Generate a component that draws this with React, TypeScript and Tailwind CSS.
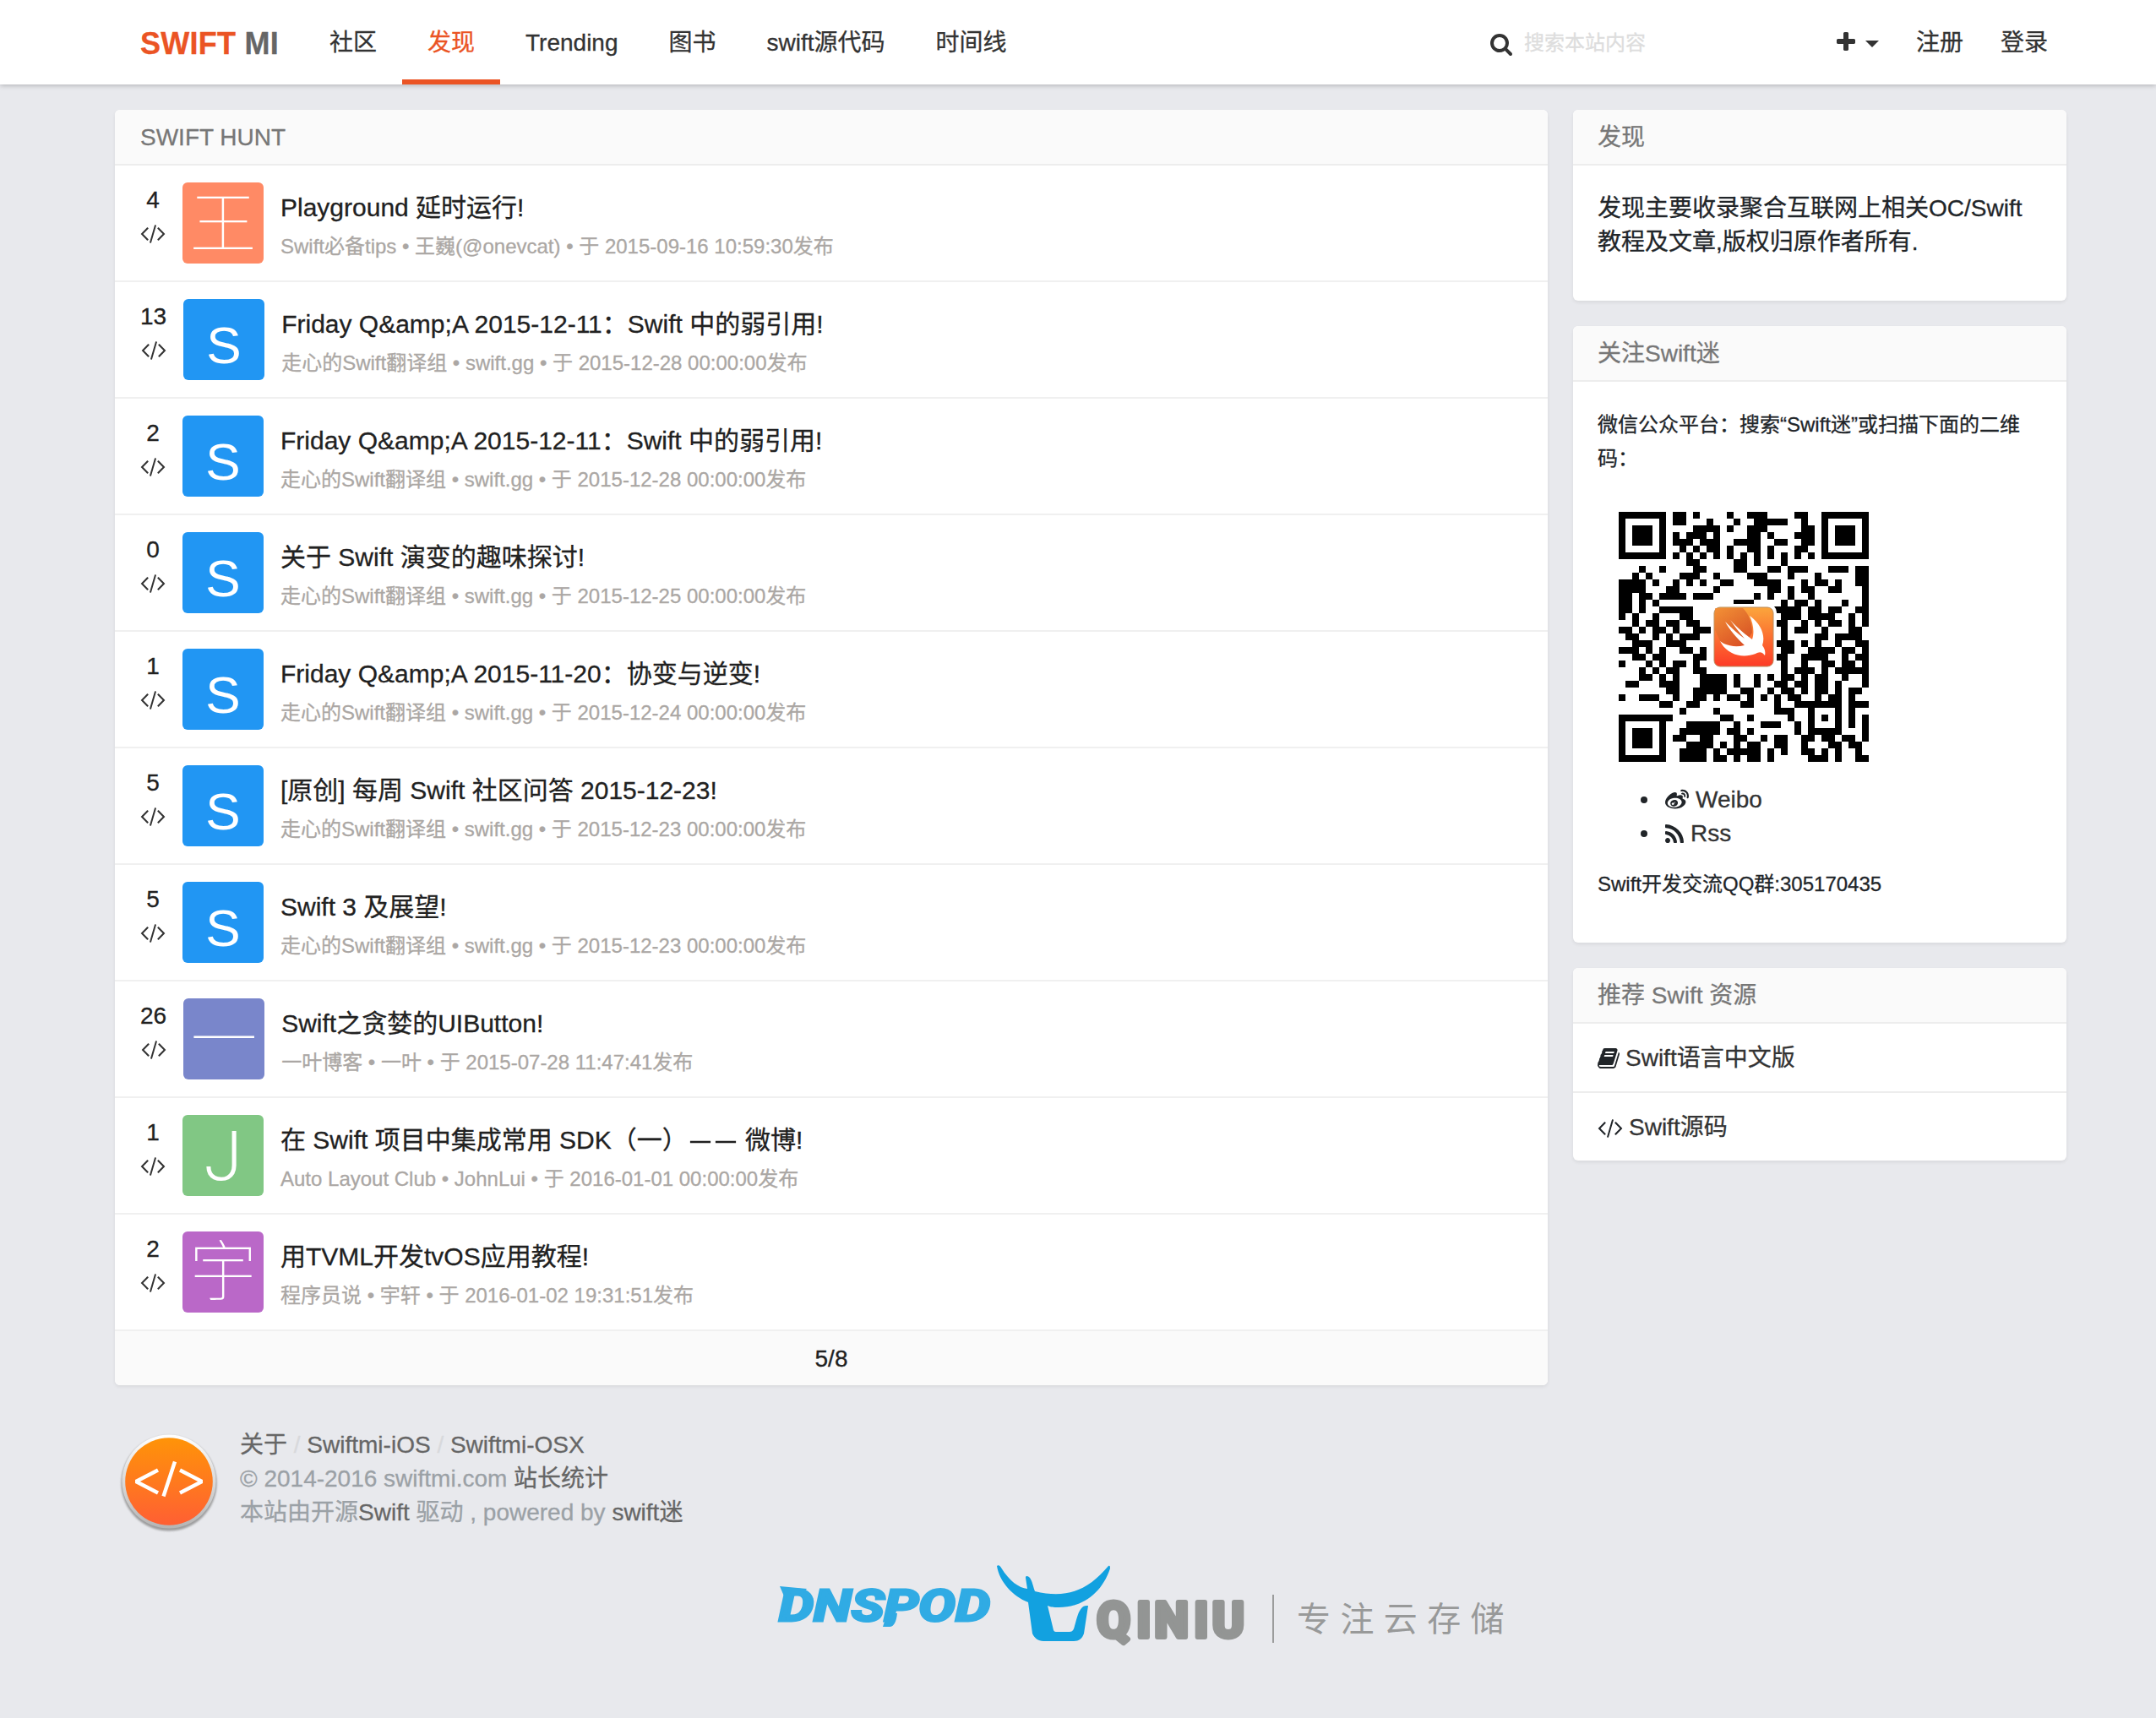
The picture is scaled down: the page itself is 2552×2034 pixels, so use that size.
import React from "react";

const FONT = "font-['Liberation_Sans','Noto_Sans_CJK_SC',sans-serif] [-webkit-text-stroke:0.3px]";

type IconProps = { className?: string };

function FaIcon({ box, d, className }: IconProps & { box: string; d: string }) {
  return (
    <svg viewBox={box} className={className} fill="currentColor" aria-hidden="true">
      <path d={d} />
    </svg>
  );
}

const CODE =
  "M617 1399l-50 50q-10 10-23 10t-23-10l-466-466q-10-10-10-23t10-23l466-466q10-10 23-10t23 10l50 50q10 10 10 23t-10 23l-393 393 393 393q10 10 10 23t-10 23zm591-1067l-373 1291q-4 13-15.5 19.5t-23.5 2.5l-62-17q-13-4-19.5-15.5t-2.5-24.5l373-1291q4-13 15.5-19.5t23.5-2.5l62 17q13 4 19.5 15.5t2.5 24.5zm657 651l-466 466q-10 10-23 10t-23-10l-50-50q-10-10-10-23t10-23l393-393-393-393q-10-10-10-23t10-23l50-50q10-10 23-10t23 10l466 466q10 10 10 23t-10 23z";
const SEARCH =
  "M1216 832q0-185-131.5-316.5t-316.5-131.5-316.5 131.5-131.5 316.5 131.5 316.5 316.5 131.5 316.5-131.5 131.5-316.5zm512 832q0 52-38 90t-90 38q-54 0-90-38l-343-342q-179 124-399 124-143 0-273.5-55.5t-225-150-150-225-55.5-273.5 55.5-273.5 150-225 225-150 273.5-55.5 273.5 55.5 225 150 150 225 55.5 273.5q0 220-124 399l343 343q37 37 37 90z";
const BOOK =
  "M1703 478q40 57 18 129l-275 906q-19 64-76.5 107.5t-122.5 43.5h-923q-77 0-148.5-53.5t-99.5-131.5q-24-67-2-127 0-4 3-27t4-37q1-8-3-21.5t-3-19.5q2-11 8-21t16.5-23.5 16.5-23.5q23-38 45-91.5t30-91.5q3-10 .5-30t-.5-28q3-11 17-28t17-23q21-36 42-92t25-90q1-9-2.5-32t.5-28q4-13 22-30.5t22-22.5q19-26 42.5-84.5t27.5-96.5q1-8-3-25.5t-2-26.5q2-8 9-18t18-23 17-21q8-12 16.5-30.5t15-35 16-36 19.5-32 26.5-23.5 36-11.5 47.5 5.5l-1 3q38-9 51-9h761q74 0 114 56t18 130l-274 906q-36 119-71.5 153.5t-128.5 34.5h-869q-27 0-38 15-11 16-1 43 24 70 144 70h923q29 0 56-15.5t35-41.5l300-987q7-22 5-57 38 15 59 43zm-1064 2q-4 13 2 22.5t20 9.5h608q13 0 25.5-9.5t16.5-22.5l21-64q4-13-2-22.5t-20-9.5h-608q-13 0-25.5 9.5t-16.5 22.5zm-83 256q-4 13 2 22.5t20 9.5h608q13 0 25.5-9.5t16.5-22.5l21-64q4-13-2-22.5t-20-9.5h-608q-13 0-25.5 9.5t-16.5 22.5z";
const PLUS =
  "M1600 736v192q0 40-28 68t-68 28h-416v416q0 40-28 68t-68 28h-192q-40 0-68-28t-28-68v-416h-416q-40 0-68-28t-28-68v-192q0-40 28-68t68-28h416v-416q0-40 28-68t68-28h192q40 0 68 28t28 68v416h416q40 0 68 28t28 68z";
const RSS =
  "M576 1344q0 80-56 136t-136 56-136-56-56-136 56-136 136-56 136 56 56 136zm512 123q2 28-17 48-18 21-47 21h-135q-25 0-43-16.5t-20-41.5q-22-229-184.5-391.5t-391.5-184.5q-25-2-41.5-20t-16.5-43v-135q0-29 21-47 17-17 43-17h5q160 13 306 80.5t259 181.5q114 113 181.5 259t80.5 306zm512 2q2 27-18 47-18 20-46 20h-143q-26 0-44.5-17.5t-19.5-42.5q-12-215-101-408.5t-231.5-336-336-231.5-408.5-102q-25-1-42.5-19.5t-17.5-43.5v-143q0-28 20-46 18-18 44-18h3q262 13 501.5 120t425.5 294q187 186 294 425.5t120 501.5z";
const WEIBO =
  "M407 177.6c7.6-24-13.4-46.8-37.4-41.7-22 4.8-28.8-28.1-7.1-32.8 50.1-10.9 92.3 37.1 76.5 84.8-6.8 21.2-38.8 10.8-32-10.3zM214.8 446.7C108.5 446.7 0 395.3 0 310.4c0-44.3 28-95.4 76.3-143.7C176 67 279.5 65.8 249.9 161c-4 13.1 12.3 5.7 12.3 6 79.5-33.6 140.5-16.8 114 51.4-3.7 9.4 1.1 10.9 8.3 13.1 135.7 42.3 34.8 215.2-169.7 215.2zm143.7-146.3c-5.4-55.7-78.5-94-163.4-85.7-84.8 8.6-148.8 60.3-143.4 116s78.5 94 163.4 85.7c84.8-8.6 148.8-60.3 143.4-116zM347.9 35.1c-25.9 5.6-16.8 43.7 8.3 38.3 72.3-15.2 134.8 52.8 111.7 124-7.4 24.2 29.1 37 37.4 12 31.9-99.8-55.1-195.9-157.4-174.3zm-78.5 311c-17.1 38.8-66.8 60-109.1 46.3-40.8-13.1-58-53.4-40.3-89.7 17.7-35.4 63.1-55.4 103.4-45.1 42 10.8 63.1 50.2 46 88.5zm-86.3-30c-12.9-5.4-30 .3-38 12.9-8.3 12.9-4.3 28 8.6 34 13.1 6 30.8.3 39.1-12.9 8-13.1 3.7-28.3-9.7-34zm32.6-13.4c-5.1-1.7-11.4.6-14.3 5.4-2.9 5.1-1.4 10.6 3.7 12.9 5.1 2 11.7-.3 14.6-5.4 2.8-5.2 1.1-10.9-4-12.9z";

const CodeIcon = ({ className }: IconProps) => (
  <FaIcon box="0 0 1920 1792" d={CODE} className={className} />
);

type Item = {
  votes: number;
  letter: string;
  title: React.ReactNode;
  meta: string;
};

const Dash = () => <span className="inline-block scale-x-80">—</span>;

const ITEMS: Item[] = [
  { votes: 4, letter: "王", title: "Playground 延时运行!", meta: "Swift必备tips • 王巍(@onevcat) • 于 2015-09-16 10:59:30发布" },
  { votes: 13, letter: "S", title: "Friday Q&amp;A 2015-12-11：Swift 中的弱引用!", meta: "走心的Swift翻译组 • swift.gg • 于 2015-12-28 00:00:00发布" },
  { votes: 2, letter: "S", title: "Friday Q&amp;A 2015-12-11：Swift 中的弱引用!", meta: "走心的Swift翻译组 • swift.gg • 于 2015-12-28 00:00:00发布" },
  { votes: 0, letter: "S", title: "关于 Swift 演变的趣味探讨!", meta: "走心的Swift翻译组 • swift.gg • 于 2015-12-25 00:00:00发布" },
  { votes: 1, letter: "S", title: "Friday Q&amp;A 2015-11-20：协变与逆变!", meta: "走心的Swift翻译组 • swift.gg • 于 2015-12-24 00:00:00发布" },
  { votes: 5, letter: "S", title: "[原创] 每周 Swift 社区问答 2015-12-23!", meta: "走心的Swift翻译组 • swift.gg • 于 2015-12-23 00:00:00发布" },
  { votes: 5, letter: "S", title: "Swift 3 及展望!", meta: "走心的Swift翻译组 • swift.gg • 于 2015-12-23 00:00:00发布" },
  { votes: 26, letter: "一", title: "Swift之贪婪的UIButton!", meta: "一叶博客 • 一叶 • 于 2015-07-28 11:47:41发布" },
  {
    votes: 1,
    letter: "J",
    title: (
      <>
        在 Swift 项目中集成常用 SDK（一）
        <Dash />
        <Dash /> 微博!
      </>
    ),
    meta: "Auto Layout Club • JohnLui • 于 2016-01-01 00:00:00发布",
  },
  { votes: 2, letter: "宇", title: "用TVML开发tvOS应用教程!", meta: "程序员说 • 宇轩 • 于 2016-01-02 19:31:51发布" },
];

const AVATARS: Record<string, { bg: string; text: string; baseline: number }> = {
  王: { bg: "bg-[#ff8a65]", text: "text-[79px] font-thin [-webkit-text-stroke:1px_white]", baseline: 77 },
  S: { bg: "bg-[#2196f3]", text: "font-['Liberation_Sans'] text-[62px] [-webkit-text-stroke:0px]", baseline: 76 },
  一: { bg: "bg-[#7986cb]", text: "text-[79px] font-thin [-webkit-text-stroke:0.8px_white]", baseline: 77 },
  J: { bg: "bg-[#81c784]", text: "text-[82px] font-light [-webkit-text-stroke:0.8px_white]", baseline: 77 },
  宇: { bg: "bg-[#ba68c8]", text: "text-[79px] font-thin [-webkit-text-stroke:0.8px_white]", baseline: 76 },
};

function Avatar({ letter }: { letter: string }) {
  const a = AVATARS[letter];
  return (
    <div className={`ml-5 size-24 shrink-0 overflow-hidden rounded-md ${a.bg}`}>
      <svg viewBox="0 0 96 96" className="size-24 font-['Roboto','Noto_Sans_CJK_SC',sans-serif]">
        <text x="48" y={a.baseline} textAnchor="middle" fill="#fff" className={a.text}>
          {letter}
        </text>
      </svg>
    </div>
  );
}

function Row({ item }: { item: Item }) {
  return (
    <li className="flex h-[138px] border-b-2 border-[#f0f0f0] px-[30px] pt-5">
      <div className="flex flex-col items-center text-[28px] leading-[42px] text-[#212121]">
        <span>{item.votes}</span>
        <span className="flex h-9 items-center">
          <CodeIcon className="h-7 w-[30px] text-[#333]" />
        </span>
      </div>
      <Avatar letter={item.letter} />
      <div className="ml-5 flex flex-col pt-2.5 whitespace-nowrap">
        <a className="text-[30px] leading-10 text-[#212121]">{item.title}</a>
        <span className="mt-1.5 text-2xl leading-10 text-[#aba7a4]">{item.meta}</span>
      </div>
    </li>
  );
}

const CARD = "overflow-hidden rounded-md bg-white shadow-[0_2px_4px_rgba(0,0,0,0.07)]";

function CardHead({ children, className = "px-[30px]" }: { children: React.ReactNode; className?: string }) {
  return (
    <h2 className={`h-[66px] border-b-2 border-[#ededed] bg-[#fafafa] text-[28px] leading-[66px] text-[#777] ${className}`}>
      {children}
    </h2>
  );
}

const QR_ROWS = [
  "#######.##.#....#..###....##..#######",
  "#.....#.##...#...#..#####..#..#.....#",
  "#.###.#....####.#..###.....##.#.###.#",
  "#.###.#.#.###.#....##.#...###.#.###.#",
  "#.###.#.###.###..####..##..##.#.###.#",
  "#.....#..#.#.##.#..##.#...##..#.....#",
  "#######.#.#.#.#.#.#.#.#.#.#.#.#######",
  "..........##.....##.#...#............",
  "...#..#....##....##...##.###...###.##",
  "..#.#....###..#....###...#...#.....##",
  "####.#..#.#.#..##...####...#.##.#..##",
  "####...##.....#.......##.#.##..##...#",
  "##.##.####.###......#.#..#..#.......#",
  "##.#.#...........###....#.##.#...#..#",
  "##.#..#####............####.##.##..##",
  "#.#..#...##.............###.####..#.#",
  "..#.##.##.##...........##..#.#.##.#.#",
  "##.#.##.#..###..........#.##..#...##.",
  ".##..#.#.###............#....##.####.",
  "..###..###.............###.#.#..#..##",
  "###.#.#..##.#...........##..####.##.#",
  "..##.##....##..........##..####..#.##",
  "#...#.#.##.#............#..#..##.##.#",
  "...#.#.##..##...........#.###.#.#####",
  "...##.#.#...####.#..#.#.##.#.##..#..#",
  ".##...###...####.#..#..##.##.##.#...#",
  ".......##..#####..##..#.##.#.##.#.##.",
  "#..###..#..##.#.##.#.#.#.##..#.##.#..",
  "......##..##......##...#..#######.###",
  ".........#....#........###..#...#.#..",
  "########.......##..#.....#..#.#.#.#.#",
  "#.....#...#####..#...###..#.#...#.#.#",
  "#.###.#..######.##.#......#.#####...#",
  "#.###.#.##..##...##..#.##..##.##.##.#",
  "#.###.#...####.#.#.##..##..#...##.##.",
  "#.....#..####.#.#####.#.#..##.#.#..#.",
  "#######..####.##.#.##.#.....###.#..##",
];

function QrCode() {
  return (
    <svg viewBox="0 0 296 296" className="size-[296px]" shapeRendering="crispEdges">
      <defs>
        <linearGradient id="swiftBg" x1="0" y1="0" x2="0" y2="1">
          <stop offset="0" stopColor="#fba63c" />
          <stop offset="1" stopColor="#fd3b27" />
        </linearGradient>
        <linearGradient id="swiftShade" x1="0" y1="0" x2="1" y2="1">
          <stop offset="0" stopColor="#f08a34" />
          <stop offset="1" stopColor="#c8421f" />
        </linearGradient>
      </defs>
      {QR_ROWS.map((row, y) =>
        row.split("").map((c, x) =>
          c === "#" ? <rect key={`${x}-${y}`} x={x * 8} y={y * 8} width="8" height="8" /> : null
        )
      )}
      <g shapeRendering="auto">
        <rect x="109" y="109" width="78" height="79" rx="10" fill="#fff" />
        <rect x="113" y="113" width="70" height="70" rx="7" fill="url(#swiftBg)" stroke="#b98a5a" strokeWidth="1" />
        <path d="M114 114H147C154 121 158 131 158 143L148 158C139 161 129 157 121 155L114 140Z" fill="url(#swiftShade)" opacity="0.75" />
        <path
          d="M120 153C126 158 137 161 149 158C139 149 131 139 126 130C134 138 142 145 149 150C142 142 136 134 132 128C142 139 151 146 158 151C161 142 159 132 155 123C169 133 174 147 170 158C173 162 174 166 173 170C169 165 166 166 162 168C146 174 128 169 120 153Z"
          fill="#fff"
        />
      </g>
    </svg>
  );
}

function Header() {
  const tabs = ["社区", "发现", "Trending", "图书", "swift源代码", "时间线"];
  return (
    <header className="relative flex h-[100px] items-stretch bg-white pr-[128px] pl-[166px] text-[28px] leading-[102px] text-[#333] shadow-[0_1px_6px_rgba(0,0,0,0.25)]">
      <a className="w-[194px] text-4xl leading-[103px] font-bold tracking-[0.25px] whitespace-nowrap text-[#666]">
        <span className="text-[#eb5424]">SWIFT</span> MI
      </a>
      <nav className="flex">
        {tabs.map((t) => (
          <a
            key={t}
            className={
              t === "发现"
                ? "border-b-6 border-[#eb5424] px-[30px] text-[#eb5424]"
                : "px-[30px]"
            }
          >
            {t}
          </a>
        ))}
      </nav>
      <div className="ml-auto flex w-[409px] items-center">
        <FaIcon box="0 0 1792 1792" d={SEARCH} className="mt-1 size-7" />
        <span className="ml-[13px] pt-0.5 text-2xl text-[#ddd]">搜索本站内容</span>
      </div>
      <div className="flex items-center">
        <FaIcon box="0 0 1792 1792" d={PLUS} className="-ml-px size-7" />
        <span className="mt-1 ml-[9px] border-x-8 border-t-8 border-x-transparent border-t-[#333]" />
        <a className="ml-11 pt-0.5">注册</a>
        <a className="ml-11 pt-0.5">登录</a>
      </div>
    </header>
  );
}

function Sidebar() {
  return (
    <aside className="flex w-[584px] shrink-0 flex-col gap-[30px] text-[28px] leading-10 text-[#212529]">
      <section className={CARD}>
        <CardHead className="px-[29px]">发现</CardHead>
        <div className="px-[29px] pt-[31px] pb-[49px] whitespace-nowrap">
          发现主要收录聚合互联网上相关OC/Swift
          <br />
          教程及文章,版权归原作者所有.
        </div>
      </section>
      <section className={CARD}>
        <CardHead className="px-[29px]">关注Swift迷</CardHead>
        <div className="px-[29px] pt-[31px] pb-[49px]">
          <p className="mb-5 text-2xl leading-10 whitespace-nowrap">
            微信公众平台：搜索“Swift迷”或扫描下面的二维
            <br />
            码：
          </p>
          <div className="px-[25px] pt-[23px] pb-[25px]">
            <QrCode />
          </div>
          <ul className="mb-5 text-[#333]">
            <li className="flex items-center pl-[51px]">
              <span className="size-2 rounded-full bg-[#212529]" />
              <FaIcon box="0 0 512 512" d={WEIBO} className="mr-2 ml-[21px] size-7 text-[#212529]" />
              Weibo
            </li>
            <li className="flex items-center pl-[51px]">
              <span className="size-2 rounded-full bg-[#212529]" />
              <FaIcon box="192 128 1408 1408" d={RSS} className="mr-2 ml-[21px] size-[22px] text-[#212529]" />
              Rss
            </li>
          </ul>
          <p className="text-2xl leading-10">Swift开发交流QQ群:305170435</p>
        </div>
      </section>
      <section className={CARD}>
        <CardHead className="px-[29px]">推荐 Swift 资源</CardHead>
        <a className="flex h-[82px] items-center border-b-2 border-[#ededed] px-[29px] pt-0.5 text-[#333]">
          <FaIcon box="64 0 1664 1792" d={BOOK} className="mr-[7px] h-7 w-[26px] text-[#212529]" />
          Swift语言中文版
        </a>
        <a className="flex h-20 items-center px-[29px] pt-0.5 text-[#333]">
          <CodeIcon className="mr-[7px] h-7 w-[30px] text-[#212529]" />
          Swift源码
        </a>
      </section>
    </aside>
  );
}

function SiteLogo() {
  return (
    <svg viewBox="0 0 128 128" className="size-32">
      <defs>
        <linearGradient id="rim" x1="0" y1="0" x2="0" y2="1">
          <stop offset="0" stopColor="#fff" />
          <stop offset="1" stopColor="#b4b4b4" />
        </linearGradient>
        <linearGradient id="disc" x1="0" y1="0" x2="0" y2="1">
          <stop offset="0" stopColor="#ff9408" />
          <stop offset="1" stopColor="#ff5f33" />
        </linearGradient>
        <filter id="soft" x="-10%" y="-10%" width="120%" height="120%">
          <feGaussianBlur stdDeviation="1.2" />
        </filter>
      </defs>
      <circle cx="64" cy="65" r="56.5" fill="#8a8a8a" opacity="0.8" filter="url(#soft)" />
      <circle cx="64" cy="63" r="55.5" fill="url(#rim)" />
      <circle cx="64" cy="63" r="51.8" fill="url(#disc)" />
      <g stroke="#fff" strokeWidth="4.4" fill="none">
        <path d="M51 49.500L25 63L51 76.500M77 49.500L103 63L77 76.500M71 39.500L57.500 80.500" strokeLinejoin="bevel" />
      </g>
    </svg>
  );
}

function Sponsors() {
  return (
    <svg viewBox="0 0 880 120" className="h-[120px] w-[880px] [-webkit-text-stroke:inherit]">
      <path d="M13 38L45 41L40 47L19 52ZM140 70L152 70C151 80 148 86 143 86H135Z" fill="#30abe4" />
      <text
        x="12"
        y="79"
        textLength="250"
        lengthAdjust="spacingAndGlyphs"
        fill="#30abe4"
        stroke="#30abe4"
        strokeWidth="3"
        className="font-['Roboto'] text-[52px] font-bold italic"
      >
        DNSPOD
      </text>
      <path
        d="M270 14C272 12 274 14 275 16C285 32 296 40 306 41L304 28C304 25 307 26 309 28C312 32 313 39 315 44C356 54 380 40 402 14C404 13 404 15 404 17C394 47 370 64 341 63C335 63 332 62 330 61L337 90C338 92 339 92 341 92H356C360 92 361 89 362 85C365 75 366 68 371 63C373 61 376 61 378 61L373 94C371 100 367 103 361 103H325C319 103 314 99 312 94L307 57C289 50 273 33 270 14Z"
        fill="#12a1e0"
      />
      <text
        x="388.5 435.5 456.5 503.5 525"
        y="98"
        fill="#939594"
        stroke="#939594"
        strokeWidth="6"
        strokeLinejoin="round"
        className="font-['Roboto'] text-[57px] font-bold"
      >
        QINIU
      </text>
      <rect x="596" y="48" width="2" height="57" fill="#9b9c9c" />
      <text x="625" y="91" fill="#989999" letterSpacing="11.4" className="font-['Noto_Sans_CJK_SC'] text-[40px] font-normal">
        专注云存储
      </text>
    </svg>
  );
}

export default function App() {
  return (
    <div className={`min-h-[2034px] bg-[#e8e9ed] ${FONT}`}>
      <Header />
      <main className="flex items-start gap-[30px] pt-[30px] pl-[136px]">
        <section className={`w-[1696px] shrink-0 ${CARD}`}>
          <CardHead>SWIFT HUNT</CardHead>
          <ul>
            {ITEMS.map((item, i) => (
              <Row key={i} item={item} />
            ))}
          </ul>
          <div className="h-16 bg-[#fafafa] text-center text-[28px] leading-[66px] text-[#212121]">5/8</div>
        </section>
        <Sidebar />
      </main>
      <footer>
        <div className="flex gap-5 pt-[51px] pl-[136px] text-[28px] leading-10 text-[#9ba1a6]">
          <SiteLogo />
          <div className="whitespace-nowrap text-[#9ba1a6]">
            <p>
              <span className="text-[#666]">关于</span> <span className="text-[#d8d9dc]">/</span>{" "}
              <span className="text-[#666]">Swiftmi-iOS</span> <span className="text-[#d8d9dc]">/</span>{" "}
              <span className="text-[#666]">Swiftmi-OSX</span>
            </p>
            <p>
              © 2014-2016 swiftmi.com <span className="text-[#666]">站长统计</span>
            </p>
            <p>
              本站由开源<span className="text-[#666]">Swift</span> 驱动 , powered by{" "}
              <span className="text-[#666]">swift迷</span>
            </p>
          </div>
        </div>
        <div className="mt-[21px] flex pl-[910px]">
          <Sponsors />
        </div>
      </footer>
    </div>
  );
}
